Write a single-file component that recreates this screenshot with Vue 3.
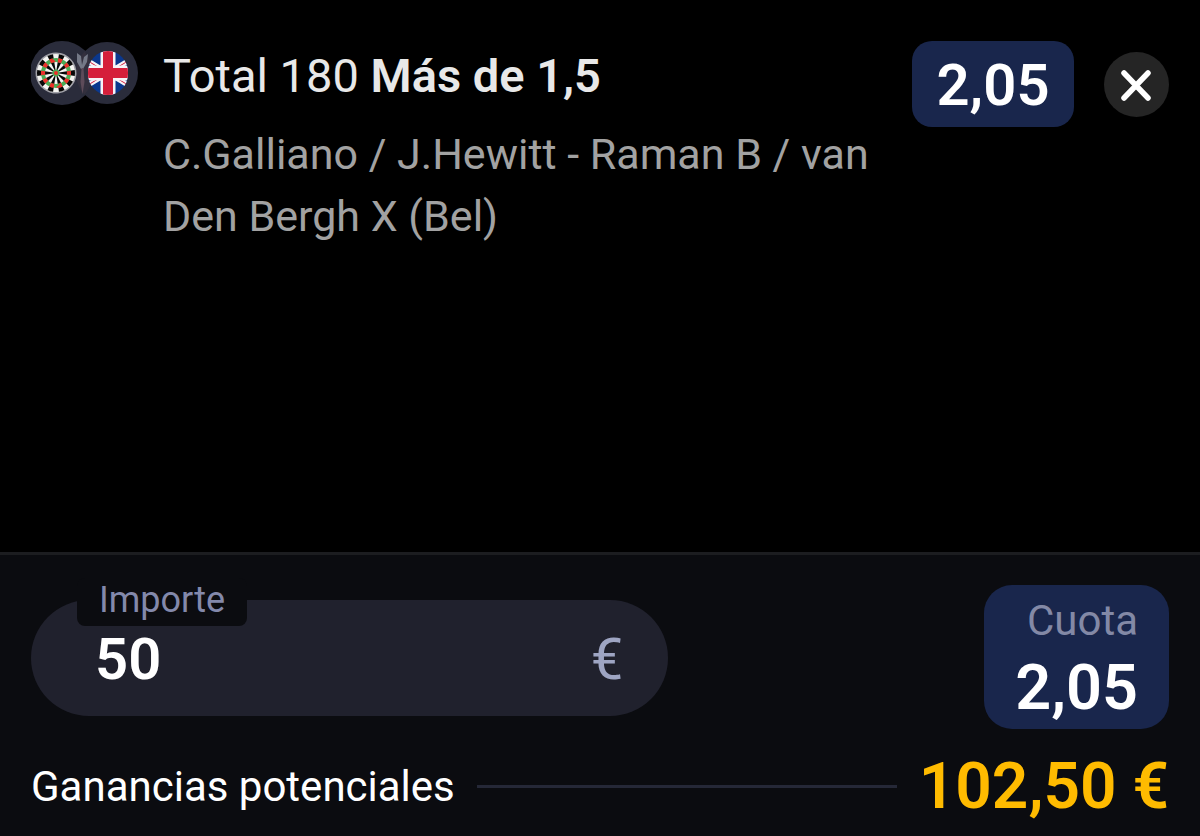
<script setup>
import { computed, ref } from 'vue'

const stake = ref('50')
const odds = 2.05
const format = (n) => n.toFixed(2).replace('.', ',')
const winnings = computed(() => {
  const value = parseFloat(stake.value.replace(',', '.'))
  return format((Number.isFinite(value) ? value : 0) * odds)
})
</script>

<template>
  <main class="slip">
    <section class="bet">
      <svg class="sport" viewBox="0 0 107 65" aria-hidden="true">
        <defs>
          <clipPath id="flag-clip"><rect x="57" y="10" width="40" height="44" rx="20" ry="21" /></clipPath>
        </defs>
        <circle cx="31" cy="32" r="32" fill="#2a2c3b" />
        <circle cx="76" cy="32" r="31" fill="#2a2c3b" />
        <path d="M53.500 10.500a32 32 0 0 1 0 43a31 31 0 0 1 0-43z" fill="#33303e" />
        <path d="M46 12l4 3 1 9 2-8 4-3-1 8-4 7h-2l-4-7z" fill="#747987" />
        <path d="M50.500 27h2l1 14-2 12-2-12z" fill="#5d4b59" />
        <g transform="rotate(-9 25 32)" fill="none">
          <circle cx="25" cy="32" r="20.500" fill="#a0a0a7" />
          <circle cx="25" cy="32" r="19" fill="#f5f5f2" />
          <circle cx="25" cy="32" r="9.500" stroke="#080808" stroke-width="19" pathLength="20" stroke-dasharray="1 1" />
          <circle cx="25" cy="32" r="13" stroke="#4aab56" stroke-width="4" />
          <circle cx="25" cy="32" r="13" stroke="#ed302b" stroke-width="4" pathLength="20" stroke-dasharray="1 1" />
          <circle cx="25" cy="32" r="3.500" fill="#4aab56" />
          <circle cx="25" cy="32" r="2" fill="#ed302b" />
        </g>
        <g clip-path="url(#flag-clip)">
          <path d="M56 9h43v46H56z" fill="#0b388d" />
          <path d="M47 14l60 36M107 14L47 50" stroke="#f6f4f7" stroke-width="5" />
          <path d="M47 14l60 36M107 14L47 50" stroke="#d51f3b" stroke-width="1" />
          <path d="M77 9v46M56 32h43" stroke="#f6f4f7" stroke-width="15" />
          <path d="M77 9v46M56 32h43" stroke="#d51f3b" stroke-width="10" />
        </g>
      </svg>
      <div class="details">
        <h1 class="market">Total 180 <strong>Más de 1,5</strong></h1>
        <p class="match">C.Galliano / J.Hewitt - Raman B / van Den Bergh X (Bel)</p>
      </div>
      <span class="price">{{ format(odds) }}</span>
      <button class="close" type="button" aria-label="Eliminar">
        <svg viewBox="0 0 65 65" aria-hidden="true">
          <path d="M20 21l24 25M44 21L20 46" fill="none" stroke="#fff" stroke-width="5.500" stroke-linecap="round" />
        </svg>
      </button>
    </section>

    <section class="summary">
      <div class="entry">
        <div class="field">
          <label class="label" for="stake">Importe</label>
          <input id="stake" v-model="stake" class="stake" type="text" inputmode="decimal" />
          <span class="currency">€</span>
        </div>
        <div class="total">
          <span class="total-label">Cuota</span>
          <span class="total-value">{{ format(odds) }}</span>
        </div>
      </div>
      <div class="payout">
        <span class="payout-label">Ganancias potenciales</span>
        <span class="rule"></span>
        <output class="payout-value" for="stake">{{ winnings }} €</output>
      </div>
    </section>
  </main>
</template>

<style>
body {
  margin: 0;
  background: #000;
}
</style>

<style scoped>
.slip {
  display: flex;
  flex-direction: column;
  min-height: 100vh;
  background: #000;
  color: #fff;
  font-family: Roboto, "Liberation Sans", sans-serif;
}

.bet {
  flex: 1;
  display: flex;
  align-items: flex-start;
  padding: 41px 31px;
}

.sport {
  flex: none;
  width: 107px;
  height: 65px;
}

.details {
  flex: 1;
  min-width: 0;
  margin: 0 30px 0 25px;
}

.market {
  margin: 0;
  font-size: 47px;
  line-height: 70px;
  font-weight: 400;
  color: #e8e8e8;
}

.market strong {
  font-weight: 600;
}

.match {
  margin: 12px 0 0;
  font-size: 43px;
  line-height: 62px;
  color: #a2a2a2;
}

.price {
  box-sizing: border-box;
  min-width: 162px;
  padding: 2px 24px 0;
  border-radius: 20px;
  background: #19264c;
  font-size: 58px;
  line-height: 84px;
  font-weight: 600;
  text-align: center;
}

.close {
  flex: none;
  width: 65px;
  height: 65px;
  margin: 11px 0 0 30px;
  padding: 0;
  border: 0;
  border-radius: 50%;
  background: #252525;
}

.close svg {
  display: block;
}

.summary {
  padding: 30px 31px 14px;
  border-top: 3px solid #1c1d20;
  background: #0b0c10;
}

.entry {
  display: flex;
  align-items: flex-start;
  justify-content: space-between;
}

.field {
  position: relative;
  box-sizing: border-box;
  display: flex;
  align-items: center;
  width: 56%;
  height: 116px;
  margin-top: 15px;
  padding: 2px 45px 0 64px;
  border-radius: 58px;
  background: #20212d;
}

.label {
  position: absolute;
  top: -22px;
  left: 46px;
  padding: 0 22px 4px;
  border-radius: 8px;
  background: #0b0c10;
  font-size: 36px;
  line-height: 44px;
  color: #8389ab;
}

.stake {
  flex: 1;
  min-width: 0;
  padding: 0;
  border: 0;
  outline: 0;
  background: transparent;
  color: #fff;
  font-family: inherit;
  font-size: 58px;
  line-height: 64px;
  font-weight: 600;
}

.currency {
  font-size: 58px;
  line-height: 64px;
  font-weight: 400;
  color: #9ea5c3;
}

.total {
  box-sizing: border-box;
  display: flex;
  flex-direction: column;
  align-items: flex-end;
  min-width: 185px;
  padding: 5px 31px 5px;
  border-radius: 28px;
  background: #19264c;
}

.total-label {
  font-size: 42px;
  line-height: 62px;
  font-weight: 400;
  color: #8389a6;
}

.total-value {
  font-size: 63px;
  line-height: 72px;
  font-weight: 600;
}

.payout {
  display: flex;
  align-items: center;
  gap: 22px;
  margin-top: 21px;
}

.payout-label,
.payout-value {
  padding-top: 2px;
}

.payout-label {
  font-size: 42px;
  line-height: 70px;
}

.rule {
  flex: 1;
  height: 3px;
  background: #252837;
}

.payout-value {
  font-size: 64px;
  line-height: 70px;
  font-weight: 600;
  color: #ffbb00;
}
</style>
